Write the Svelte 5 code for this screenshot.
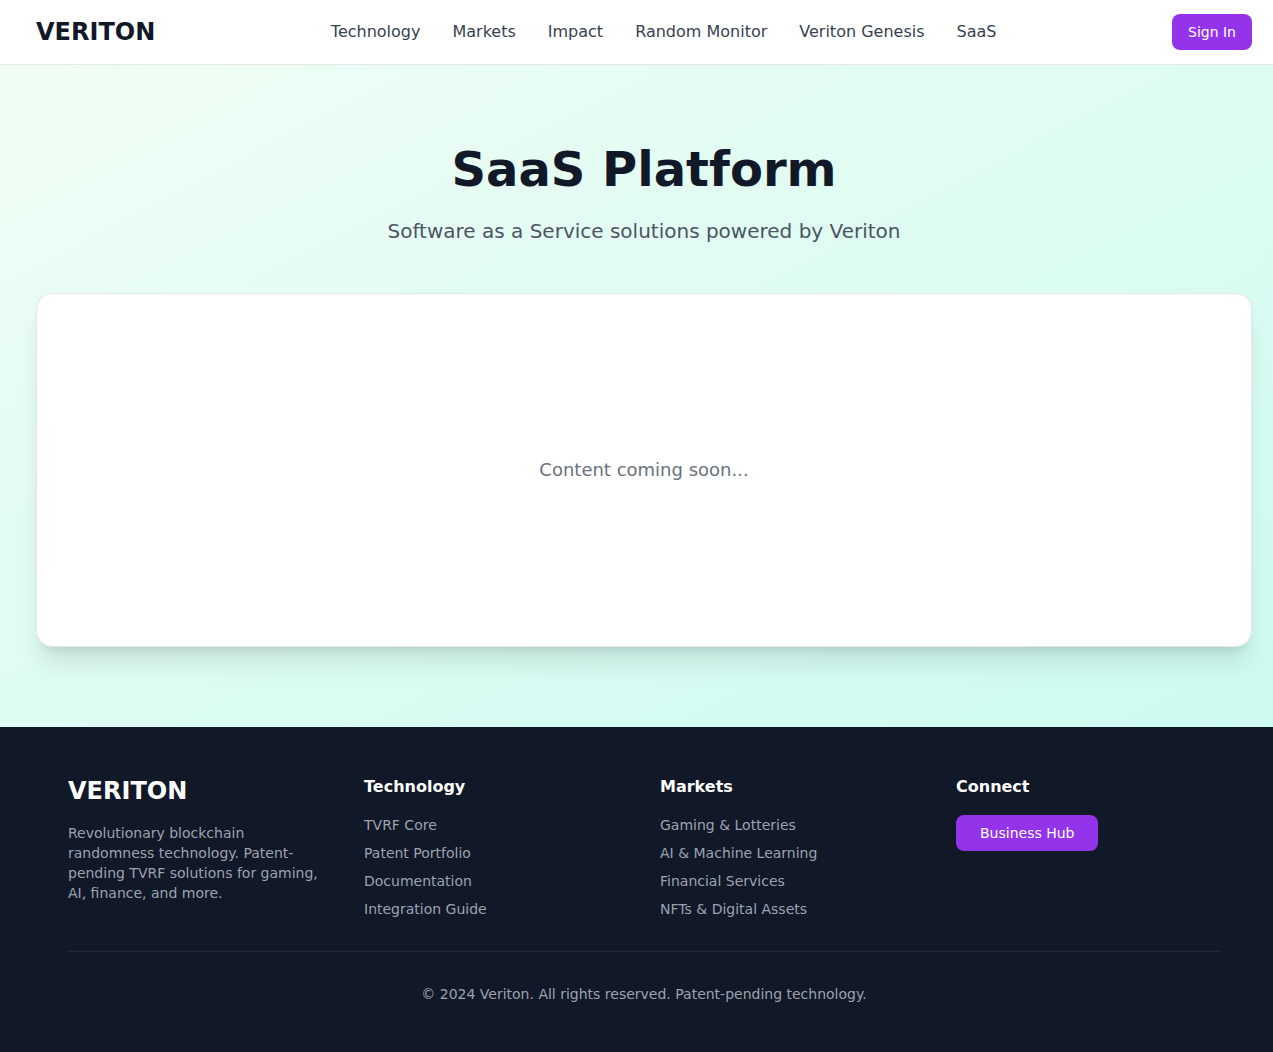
<script>
  const nav = ['Technology', 'Markets', 'Impact', 'Random Monitor', 'Veriton Genesis', 'SaaS'];
  const columns = [
    { title: 'Technology', links: ['TVRF Core', 'Patent Portfolio', 'Documentation', 'Integration Guide'] },
    { title: 'Markets', links: ['Gaming & Lotteries', 'AI & Machine Learning', 'Financial Services', 'NFTs & Digital Assets'] },
  ];
</script>

<div class="page">
  <header>
    <div class="container bar">
      <a class="brand" href="#home">VERITON</a>
      <nav>
        {#each nav as item}
          <a href="#{item.toLowerCase().replace(' ', '-')}">{item}</a>
        {/each}
      </nav>
      <button class="sign-in" type="button">Sign In</button>
    </div>
  </header>

  <main>
    <div class="container">
      <div class="intro">
        <h1>SaaS Platform</h1>
        <p>Software as a Service solutions powered by Veriton</p>
      </div>
      <section class="card">
        <p>Content coming soon...</p>
      </section>
    </div>
  </main>

  <footer>
    <div class="container">
      <div class="inner">
        <div class="grid">
          <div>
            <p class="brand light">VERITON</p>
            <p class="about">
              Revolutionary blockchain randomness technology. Patent-pending TVRF solutions for gaming, AI, finance, and more.
            </p>
          </div>
          {#each columns as column}
            <div>
              <h2>{column.title}</h2>
              <ul>
                {#each column.links as link}
                  <li><a href="#footer">{link}</a></li>
                {/each}
              </ul>
            </div>
          {/each}
          <div>
            <h2>Connect</h2>
            <button class="hub" type="button">Business Hub</button>
          </div>
        </div>
        <div class="legal">
          <p>© 2024 Veriton. All rights reserved. Patent-pending technology.</p>
        </div>
      </div>
    </div>
  </footer>
</div>

<style>
  :global(body) {
    margin: 0;
    background: #111827;
  }

  .page {
    min-height: 100vh;
    display: flex;
    flex-direction: column;
    font-family: 'DejaVu Sans', sans-serif;
    font-size: 16px;
    line-height: 24px;
    color: #111827;
  }

  .page * {
    box-sizing: border-box;
  }

  h1,
  h2,
  p,
  ul {
    margin: 0;
    padding: 0;
  }

  a {
    color: inherit;
    text-decoration: none;
  }

  .container {
    padding: 0 21px 0 36px;
  }

  header {
    background: #fff;
    border-bottom: 1px solid #e5e7eb;
  }

  .bar {
    display: flex;
    align-items: center;
    justify-content: space-between;
    height: 64px;
  }

  .brand {
    font-size: 24px;
    line-height: 32px;
    font-weight: 700;
  }

  nav {
    display: flex;
    gap: 32px;
    color: #374151;
  }

  button {
    height: 36px;
    padding: 0 16px;
    border: 0;
    border-radius: 8px;
    background: #9333ea;
    color: #fff;
    font-family: inherit;
    font-size: 14px;
    line-height: 20px;
    cursor: pointer;
  }

  button:hover {
    background: #7e22ce;
  }

  main {
    padding: 80px 0;
    background: linear-gradient(to bottom right, #f0fdf4, #ccfbf1);
  }

  .intro {
    margin-bottom: 48px;
    text-align: center;
  }

  h1 {
    margin-bottom: 24px;
    font-size: 48px;
    line-height: 48px;
    font-weight: 700;
  }

  .intro p {
    font-size: 20px;
    line-height: 28px;
    color: #4b5563;
  }

  .card {
    display: flex;
    align-items: center;
    justify-content: center;
    min-height: 354px;
    padding: 32px;
    border: 1px solid #e5e7eb;
    border-radius: 16px;
    background: #fff;
    box-shadow:
      0 20px 25px -5px rgba(0, 0, 0, 0.1),
      0 8px 10px -6px rgba(0, 0, 0, 0.1);
  }

  .card p {
    font-size: 18px;
    line-height: 28px;
    color: #6b7280;
  }

  footer {
    flex: 1;
    padding: 48px 0;
    background: #111827;
    color: #9ca3af;
    font-size: 14px;
    line-height: 20px;
  }

  .inner {
    padding: 0 32px;
  }

  .grid {
    display: grid;
    grid-template-columns: repeat(4, minmax(0, 1fr));
    gap: 32px;
  }

  .light {
    margin-bottom: 16px;
    color: #fff;
  }

  h2 {
    margin-bottom: 16px;
    font-size: 16px;
    line-height: 24px;
    font-weight: 600;
    color: #fff;
  }

  ul {
    display: grid;
    gap: 8px;
    list-style: none;
  }

  .hub {
    padding: 0 24px;
  }

  .legal {
    margin-top: 32px;
    padding-top: 32px;
    border-top: 1px solid #1f2937;
    text-align: center;
  }
</style>
